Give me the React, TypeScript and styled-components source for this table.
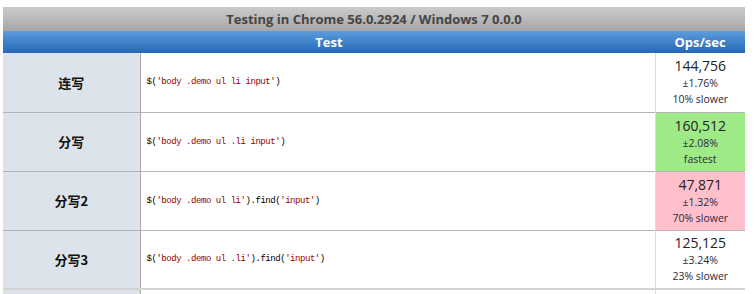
import styled, { createGlobalStyle } from "styled-components";

const GlobalStyle = createGlobalStyle`
  html, body {
    margin: 0;
    padding: 0;
    background: #fff;
    overflow: hidden;
  }
  body {
    font-family: "Open Sans", "Noto Sans CJK SC", sans-serif;
  }
`;

type Tone = "plain" | "fast" | "slow";

interface Result {
  label: string;
  code: [string, boolean][];
  ops: string;
  rme: string;
  note: string;
  tone: Tone;
}

const results: Result[] = [
  {
    label: "连写",
    code: [["$(", false], ["'body .demo ul li input'", true], [")", false]],
    ops: "144,756",
    rme: "±1.76%",
    note: "10% slower",
    tone: "plain",
  },
  {
    label: "分写",
    code: [["$(", false], ["'body .demo ul .li input'", true], [")", false]],
    ops: "160,512",
    rme: "±2.08%",
    note: "fastest",
    tone: "fast",
  },
  {
    label: "分写2",
    code: [
      ["$(", false],
      ["'body .demo ul li'", true],
      [").find(", false],
      ["'input'", true],
      [")", false],
    ],
    ops: "47,871",
    rme: "±1.32%",
    note: "70% slower",
    tone: "slow",
  },
  {
    label: "分写3",
    code: [
      ["$(", false],
      ["'body .demo ul .li'", true],
      [").find(", false],
      ["'input'", true],
      [")", false],
    ],
    ops: "125,125",
    rme: "±3.24%",
    note: "23% slower",
    tone: "plain",
  },
];

const toneBg: Record<Tone, string> = {
  plain: "#fff",
  fast: "#9eea86",
  slow: "#ffc0cb",
};

export default function App() {
  return (
    <Page>
      <GlobalStyle />
      <Results>
        <colgroup>
          <col style={{ width: 137 }} />
          <col />
          <col style={{ width: 90 }} />
        </colgroup>
        <thead>
          <tr>
            <TitleCell colSpan={3}>Testing in Chrome 56.0.2924 / Windows 7 0.0.0</TitleCell>
          </tr>
          <tr>
            <HeadCell colSpan={2}>Test</HeadCell>
            <HeadCell>Ops/sec</HeadCell>
          </tr>
        </thead>
        <tbody>
          {results.map((r) => (
            <Row key={r.label}>
              <LabelCell>{r.label}</LabelCell>
              <CodeCell>
                <pre>
                  {r.code.map(([t, str], i) =>
                    str ? <Str key={i}>{t}</Str> : <span key={i}>{t}</span>
                  )}
                </pre>
              </CodeCell>
              <OpsCell $tone={r.tone}>
                <Ops>{r.ops}</Ops>
                <Small>{r.rme}</Small>
                <Small>{r.note}</Small>
              </OpsCell>
            </Row>
          ))}
          <Row $tail>
            <LabelCell />
            <CodeCell />
            <OpsCell $tone="plain" />
          </Row>
        </tbody>
      </Results>
    </Page>
  );
}

const Page = styled.div`
  padding: 7px 10px 0 3px;
`;

const Results = styled.table`
  width: 742px;
  border-collapse: collapse;
  table-layout: fixed;
`;

const TitleCell = styled.th`
  height: 24px;
  padding: 0;
  background: linear-gradient(#cbcbcb, #a6a6a6);
  color: #454545;
  font-size: 13px;
  font-weight: 700;
  text-align: center;
  vertical-align: middle;
`;

const HeadCell = styled.th`
  height: 22px;
  padding: 0;
  background: linear-gradient(#5c9ddd, #2467b6);
  color: #fff;
  font-size: 13px;
  font-weight: 700;
  text-align: center;
  vertical-align: middle;
`;

const Row = styled.tr<{ $tail?: boolean }>`
  height: 59px;
  border-bottom: 1px solid #b4b4b4;
  ${(p) => p.$tail && `border-top: 2px solid #d4d4d4;`}
`;

const LabelCell = styled.td`
  padding: 0;
  background: #dce3ea;
  border-right: 1px solid #a9a9a9;
  color: #111;
  font-family: "Noto Sans CJK SC", "Open Sans", sans-serif;
  font-size: 13px;
  font-weight: 700;
  text-align: center;
  vertical-align: middle;
`;

const CodeCell = styled.td`
  padding: 0 0 0 6px;
  border-right: 1px solid #dcdcdc;
  vertical-align: middle;

  pre {
    margin: 0;
    font-family: "Liberation Mono", monospace;
    font-size: 9px;
    letter-spacing: -0.45px;
    color: #000;
  }
`;

const Str = styled.span`
  color: #900;
`;

const OpsCell = styled.td<{ $tone: Tone }>`
  padding: 0;
  background: ${(p) => toneBg[p.$tone]};
  text-align: center;
  vertical-align: middle;
  color: #222;
`;

const Ops = styled.div`
  font-size: 14px;
  line-height: 18px;
`;

const Small = styled.div`
  font-size: 10.5px;
  line-height: 16px;
  color: #2a2a40;
`;
